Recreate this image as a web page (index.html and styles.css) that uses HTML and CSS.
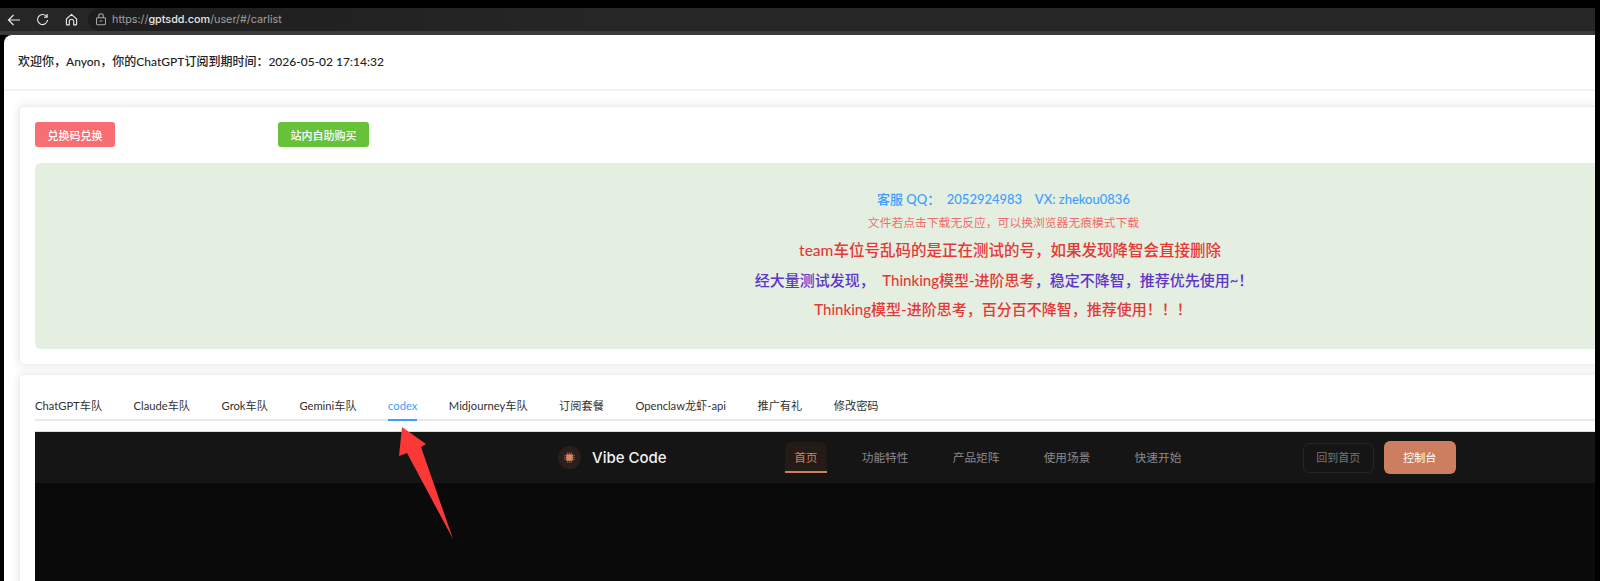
FILE: index.html
```html
<!DOCTYPE html>
<html lang="zh-CN">
<head>
    <meta charset="UTF-8">
    <title>gptsdd</title>
    <link rel="stylesheet" href="styles.css">
</head>
<body>
    <div class="toolbar">
      <svg class="tool-icon back" viewBox="0 0 14 12"><path d="M13 6H1.5M6.5 1 1.5 6l5 5"/></svg>
      <svg class="tool-icon reload" viewBox="0 0 14 14"><path d="M11.6 4.2A5.4 5.4 0 1 0 12.4 7.5M12 1.2v3.4H8.6"/></svg>
      <svg class="tool-icon home" viewBox="0 0 14 14"><path d="M1.5 6.5 7 1.5l5.5 5V12a.8.8 0 0 1-.8.8H9.4V9.2a2.4 2.4 0 0 0-4.8 0v3.6H2.3a.8.8 0 0 1-.8-.8z"/></svg>
      <div class="address">
        <svg class="lock" viewBox="0 0 12 14"><path d="M3.5 5V3.4a2.5 2.5 0 0 1 5 0V5M2.2 5h7.6a1 1 0 0 1 1 1v5.6a1 1 0 0 1-1 1H2.2a1 1 0 0 1-1-1V6a1 1 0 0 1 1-1zM4.5 8.6h3"/></svg>
        <span class="url">https://<b>gptsdd.com</b>/user/#/carlist</span>
      </div>
    </div>
    <div class="strip"></div>

    <div class="window">
      <div class="welcome">欢迎你，Anyon，你的ChatGPT订阅到期时间：2026-05-02 17:14:32</div>

      <div class="content">
        <div class="card">
          <div class="actions">
            <button class="btn btn-red">兑换码兑换</button>
            <button class="btn btn-green">站内自助购买</button>
          </div>
          <div class="notice">
            <div class="line line-blue">客服 QQ：&nbsp; 2052924983 &nbsp;&nbsp; VX: zhekou0836</div>
            <div class="line line-soft">文件若点击下载无反应，可以换浏览器无痕模式下载</div>
            <div class="line line-red line-team">team车位号乱码的是正在测试的号，如果发现降智会直接删除</div>
            <div class="line line-purple">经大量测试发现， &nbsp;<span class="hot">Thinking模型-进阶思考</span>，稳定不降智，推荐优先使用~！</div>
            <div class="line line-red line-last">Thinking模型-进阶思考，百分百不降智，推荐使用！！！</div>
          </div>
        </div>

        <div class="card card-tabs">
          <div class="tabs">
            <a class="tab">ChatGPT车队</a>
            <a class="tab">Claude车队</a>
            <a class="tab">Grok车队</a>
            <a class="tab">Gemini车队</a>
            <a class="tab active">codex</a>
            <a class="tab">Midjourney车队</a>
            <a class="tab">订阅套餐</a>
            <a class="tab">Openclaw龙虾-api</a>
            <a class="tab">推广有礼</a>
            <a class="tab">修改密码</a>
          </div>
          <div class="panel">
            <div class="panel-nav">
              <div class="logo">
                <svg viewBox="0 0 12 12"><path class="chip-pins" d="M4 0v12M6 0v12M8 0v12M0 4h12M0 6h12M0 8h12"/><rect class="chip" x="2.500" y="2.500" width="7" height="7"/></svg>
              </div>
              <span class="brand">Vibe Code</span>
              <div class="menu">
                <a class="menu-item active">首页</a>
                <a class="menu-item">功能特性</a>
                <a class="menu-item">产品矩阵</a>
                <a class="menu-item">使用场景</a>
                <a class="menu-item">快速开始</a>
              </div>
              <a class="nav-btn">回到首页</a>
              <a class="nav-btn primary">控制台</a>
            </div>
          </div>
        </div>
      </div>
    </div>

    <!-- annotation drawn over the screenshot -->
    <svg class="arrow" viewBox="0 0 60 116"><polygon points="5,0 29,17 24,20 56,112 10,26 2,29"/></svg>
</body>
</html>
```

FILE: styles.css
```css
* {
  box-sizing: border-box;
}
html, body {
  height: 100%;
}
body {
  margin: 0;
  padding-top: 8px;
  background: #000;
  overflow: hidden;
  font-family: "Lato", "Noto Sans CJK SC", sans-serif;
  color: #303133;
}
.toolbar {
  display: flex;
  align-items: center;
  height: 23px;
  width: 1595px;
  padding-left: 7px;
  background: #262626;
}
.tool-icon {
  fill: none;
  stroke: #e8e8e8;
  stroke-width: 1.2;
}
.back {
  width: 14px;
  height: 12px;
}
.reload {
  width: 13px;
  height: 13px;
  margin-left: 15px;
}
.home {
  width: 13px;
  height: 13px;
  margin-left: 16px;
}
.address {
  display: flex;
  align-items: center;
  height: 23px;
  flex: 1;
  margin-left: 10px;
  padding-left: 7px;
  border-radius: 12px 0 0 12px;
  background: linear-gradient(90deg, #1d1d1d, #262626 500px);
}
.lock {
  width: 12px;
  height: 13px;
  fill: none;
  stroke: #a8a8a8;
  stroke-width: 1.1;
}
.url {
  margin-left: 5px;
  font-family: "Inter", sans-serif;
  font-size: 10.800px;
  color: #a0a0a0;
}
.url b {
  font-weight: 500;
  color: #e6e6e6;
}
.strip {
  width: 1595px;
  height: 4px;
  background: #3a3a3a;
}
.window {
  width: 1591px;
  height: 546px;
  margin-left: 4px;
  background: #fff;
  border-radius: 8px 0 0 0;
  overflow: hidden;
}
.welcome {
  height: 56px;
  padding: 0 14px;
  line-height: 54px;
  font-size: 12px;
  font-weight: 500;
  color: #222;
  border-bottom: 2px solid #f2f2f2;
}
.content {
  padding: 15px 0 0 15px;
}
.card {
  width: 1969px;
  padding: 15px;
  background: #fff;
  border: 1px solid #ebeef5;
  border-radius: 4px;
  box-shadow: 0 0 10px rgba(0, 0, 0, 0.1);
}
.card-tabs {
  margin-top: 9px;
  padding-bottom: 0;
}
.actions {
  display: flex;
  gap: 163px;
}
.btn {
  height: 25px;
  padding: 0;
  border: 0;
  border-radius: 3px;
  font-family: inherit;
  font-size: 11px;
  font-weight: 500;
  color: #fff;
}
.btn-red {
  width: 80px;
  background: #f76f72;
}
.btn-green {
  width: 91px;
  background: #67c23a;
}
.notice {
  margin-top: 16px;
  padding: 24px 0 26px;
  background: #e4eee1;
  border-radius: 6px;
  text-align: center;
}
.line {
  line-height: 24px;
}
.line-blue {
  font-size: 13px;
  font-weight: 500;
  color: #409eff;
}
.line-soft {
  font-size: 11.800px;
  color: #f56c6c;
}
.line-red {
  line-height: 30px;
  font-size: 15.500px;
  font-weight: 500;
  color: #e53935;
}
.line-team {
  padding-left: 13px;
}
.line-purple {
  padding-left: 1px;
  line-height: 30px;
  font-size: 15px;
  font-weight: 500;
  color: #5e35c9;
}
.line-last {
  padding-right: 1px;
  line-height: 28px;
  font-size: 15px;
}
.hot {
  color: #e53935;
}
.tabs {
  display: flex;
  gap: 31.500px;
  height: 31px;
  border-bottom: 2px solid #e8e8ef;
}
.tab {
  height: 31px;
  line-height: 31px;
  font-size: 11.200px;
  color: #303133;
}
.tab.active {
  color: #409eff;
  border-bottom: 2px solid #409eff;
}
.panel {
  height: 300px;
  margin-top: 10px;
  background: #0a0a0a;
  border-top: 1px solid #ddd;
}
.panel-nav {
  display: flex;
  align-items: center;
  height: 51px;
  padding-left: 523px;
  background: #151515;
}
.logo {
  display: flex;
  align-items: center;
  justify-content: center;
  width: 23px;
  height: 23px;
  border-radius: 50%;
  background: #2a1f1a;
}
.logo svg {
  width: 11px;
  height: 11px;
}
.chip {
  fill: #d98468;
}
.chip-pins {
  stroke: #9a604a;
  stroke-width: 0.8;
}
.brand {
  margin-left: 11px;
  font-family: "Inter", sans-serif;
  font-size: 15px;
  font-weight: 500;
  color: #f2f2f2;
}
.menu {
  display: flex;
  gap: 25.200px;
  margin-left: 118px;
  margin-right: 112px;
}
.menu-item {
  height: 31px;
  padding: 0 9.500px;
  line-height: 30px;
  font-size: 11.700px;
  color: #8a8a8a;
}
.menu-item.active {
  color: #d2805f;
  background: #241a16;
  border-radius: 6px 6px 0 0;
  border-bottom: 2px solid #cf7f60;
}
.nav-btn {
  width: 71px;
  height: 30px;
  line-height: 28px;
  text-align: center;
  font-size: 11px;
  color: #777;
  border: 1px solid #262626;
  border-radius: 6px;
}
.nav-btn.primary {
  width: 72px;
  height: 33px;
  margin-left: 10px;
  line-height: 33px;
  border: 0;
  color: #fff;
  background: #cd7d60;
}
.arrow {
  position: absolute;
  left: 397px;
  top: 427px;
  width: 60px;
  height: 116px;
}
.arrow polygon {
  fill: #fb3838;
}
```
